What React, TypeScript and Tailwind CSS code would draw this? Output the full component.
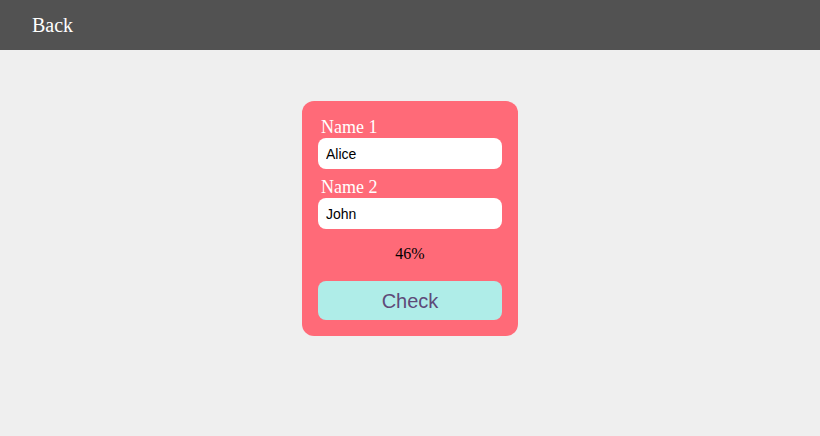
export default function App() {
  return (
    <div className="w-[820px] h-[436px] bg-[#efefef] flex flex-col">
      <div className="h-[50px] bg-[#525252] flex items-center pl-[32px]">
        <span className="text-white text-[20px] font-['Liberation_Serif',serif]">Back</span>
      </div>
      <div className="flex justify-center pt-[51px]">
        <div className="w-[216px] bg-[#ff6a78] rounded-[12px] p-[16px] flex flex-col">
          <label className="text-white text-[18px] leading-[21px] pl-[3px] font-['Liberation_Serif',serif]">Name 1</label>
          <input
            defaultValue="Alice"
            className="h-[31px] w-full bg-white rounded-[8px] px-[8px] text-[14px] text-black outline-none font-['Liberation_Sans',Arial,sans-serif]"
          />
          <label className="mt-[8px] text-white text-[18px] leading-[21px] pl-[3px] font-['Liberation_Serif',serif]">Name 2</label>
          <input
            defaultValue="John"
            className="h-[31px] w-full bg-white rounded-[8px] px-[8px] text-[14px] text-black outline-none font-['Liberation_Sans',Arial,sans-serif]"
          />
          <div className="mt-[16px] text-center text-[16px] leading-[18px] text-black font-['Liberation_Serif',serif]">46%</div>
          <button className="mt-[18px] h-[39px] w-full bg-[#afede8] rounded-[8px] text-[20px] text-[#5e4a78] font-['Liberation_Sans',Arial,sans-serif]">
            Check
          </button>
        </div>
      </div>
    </div>
  );
}
